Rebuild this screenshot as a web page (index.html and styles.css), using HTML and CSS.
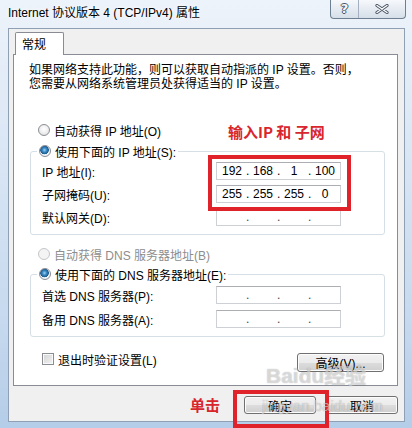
FILE: index.html
```html
<!DOCTYPE html>
<html>
<head>
	<meta charset="UTF-8">
	<title>Internet 协议版本 4 (TCP/IPv4) 属性</title>
<link rel="stylesheet" href="styles.css">
</head>
<body>

<div class="window">
	<div class="titlebar">
		<span class="title">Internet 协议版本 4 (TCP/IPv4) 属性</span>
		<div class="caption">
			<span class="cap-help">?</span>
			<span class="cap-close">
				<svg width="14" height="10" viewBox="0 0 14 10">
					<path d="M2 1.5 L12 8.5 M12 1.5 L2 8.5" stroke="#4a5566" stroke-width="3.2" stroke-linecap="round" fill="none"/>
					<path d="M2 1.5 L12 8.5 M12 1.5 L2 8.5" stroke="#fff" stroke-width="1.4" stroke-linecap="round" fill="none"/>
				</svg>
			</span>
		</div>
	</div>

	<div class="dialog">
		<div class="tabs">
			<span class="tab">常规</span>
		</div>

		<div class="panel">
			<p class="intro">如果网络支持此功能，则可以获取自动指派的 IP 设置。否则，<br>您需要从网络系统管理员处获得适当的 IP 设置。</p>

			<div class="opt opt-ip">
				<span class="radio"></span>自动获得 IP 地址(O)
			</div>

			<fieldset class="group group-ip">
				<legend><span class="radio on"></span>使用下面的 IP 地址(S):</legend>
				<div class="rows rows-ip">
					<div class="row">
						<span>IP 地址(I):</span>
						<div class="ipbox"><span class="seg">192</span><span class="dot">.</span><span class="seg">168</span><span class="dot">.</span><span class="seg">1</span><span class="dot">.</span><span class="seg">100</span></div>
					</div>
					<div class="row">
						<span>子网掩码(U):</span>
						<div class="ipbox"><span class="seg">255</span><span class="dot">.</span><span class="seg">255</span><span class="dot">.</span><span class="seg">255</span><span class="dot">.</span><span class="seg">0</span></div>
					</div>
					<div class="row">
						<span>默认网关(D):</span>
						<div class="ipbox empty"><span class="seg"></span><span class="dot">.</span><span class="seg"></span><span class="dot">.</span><span class="seg"></span><span class="dot">.</span><span class="seg"></span></div>
					</div>
				</div>
			</fieldset>

			<div class="opt opt-dns disabled">
				<span class="radio"></span>自动获得 DNS 服务器地址(B)
			</div>

			<fieldset class="group group-dns">
				<legend><span class="radio on"></span>使用下面的 DNS 服务器地址(E):</legend>
				<div class="rows rows-dns">
					<div class="row">
						<span>首选 DNS 服务器(P):</span>
						<div class="ipbox empty"><span class="seg"></span><span class="dot">.</span><span class="seg"></span><span class="dot">.</span><span class="seg"></span><span class="dot">.</span><span class="seg"></span></div>
					</div>
					<div class="row">
						<span>备用 DNS 服务器(A):</span>
						<div class="ipbox empty"><span class="seg"></span><span class="dot">.</span><span class="seg"></span><span class="dot">.</span><span class="seg"></span><span class="dot">.</span><span class="seg"></span></div>
					</div>
				</div>
			</fieldset>

			<div class="bottom-row">
				<div class="check-label"><span class="check"></span>退出时验证设置(L)</div>
				<span class="btn btn-adv">高级(V)...</span>
			</div>
		</div>

		<div class="footer">
			<span class="btn">确定</span>
			<span class="btn">取消</span>
		</div>
	</div>

	<!-- 标注 -->
	<div class="mark mark-ip"></div>
	<div class="note note-ip">输入IP 和 子网</div>
	<div class="mark mark-ok"></div>
	<div class="note note-ok">单击</div>

	<!-- 水印 -->
	<div class="wm wm-logo">Baidu经验</div>
	<div class="wm wm-url">jingyan.baidu.com</div>
</div>

</body>
</html>
```

FILE: styles.css
```css
* {
	box-sizing: border-box;
}
body {
	margin: 0;
	font: 12px "Liberation Sans", "Noto Sans CJK SC", sans-serif;
	color: #000;
}
p {
	margin: 0;
}
.window {
	position: relative;
	width: 412px;
	height: 428px;
	padding: 0 7px 6px 8px;
	display: flex;
	flex-direction: column;
	overflow: hidden;
	background: linear-gradient(#edf3fa, #dce8f5 30%, #c6d9ee 75%, #b4cde8);
}
.titlebar {
	height: 28px;
	display: flex;
	justify-content: space-between;
	align-items: flex-start;
}
.title {
	margin-top: 6px;
	line-height: 14px;
	text-shadow: 0 0 6px #fff, 0 0 3px #fff;
}
.caption {
	display: flex;
	height: 19px;
	margin-right: -1px;
	border: 1px solid #6f7f93;
	border-top: none;
	border-radius: 0 0 4px 4px;
	background: linear-gradient(#f6f8fb, #e4eaf1 55%, #d6dee8);
	overflow: hidden;
}
.cap-help {
	width: 27px;
	text-align: center;
	font: bold 13px/18px "DejaVu Sans", sans-serif;
	color: #f4f6f8;
	text-shadow: 1px 0 0 #4a5566, -1px 0 0 #4a5566, 0 1px 0 #4a5566, 0 -1px 0 #4a5566;
}
.cap-close {
	width: 47px;
	border-left: 1px solid #a4b0bf;
	display: flex;
	align-items: center;
	justify-content: center;
}
.dialog {
	flex: 1;
	display: flex;
	flex-direction: column;
	padding-top: 3px;
	background: #f0f0f0;
	border: 1px solid #8fa0b5;
}
.tabs {
	display: flex;
	padding-left: 6px;
}
.tab {
	position: relative;
	z-index: 1;
	width: 49px;
	height: 23px;
	margin-bottom: -1px;
	padding: 5px 0 0 6px;
	line-height: 14px;
	background: #fff;
	border: 1px solid #898c95;
	border-bottom: none;
	border-radius: 2px 2px 0 0;
}
.panel {
	height: 332px;
	margin: 0 6px 0 4px;
	display: flex;
	flex-direction: column;
	background: #fff;
	border: 1px solid #898c95;
}
.intro {
	margin: 8px 0 0 15px;
	line-height: 14px;
}
.opt {
	display: flex;
	align-items: center;
	gap: 4px;
	height: 16px;
	padding-left: 24px;
}
.opt-ip {
	margin-top: 31px;
}
.opt-dns {
	margin-top: 11px;
}
.disabled {
	color: #8d8d8d;
}
.radio {
	width: 12px;
	height: 12px;
	border-radius: 50%;
	border: 1px solid #8a8d92;
	background: radial-gradient(circle at 50% 40%, #fff 0, #f1f1f1 45%, #d8d8d8 100%);
}
.radio.on {
	background: radial-gradient(circle at 45% 40%, #9fd3f5 0, #3a8bc8 2px, #1d5b8c 4px, #eaf2f8 4.6px, #f7f7f7 100%);
}
.disabled .radio {
	border-color: #c4c6c9;
	background: #f4f4f4;
}
.group {
	margin: 5px 12px 0 16px;
	padding: 0 0 8px;
	min-width: 0;
	border: 1px solid #d5dfe5;
	border-radius: 3px;
}
.group-dns {
	margin-top: 4px;
}
legend {
	display: flex;
	align-items: center;
	gap: 4px;
	height: 16px;
	margin-left: 6px;
	padding: 0 2px;
	background: #fff;
}
.rows {
	display: flex;
	flex-direction: column;
	gap: 5px;
	padding-top: 3px;
}
.rows-dns {
	gap: 6px;
	padding-top: 4px;
}
.row {
	display: grid;
	grid-template-columns: 174px 125px;
	align-items: center;
	height: 18px;
	padding-left: 11px;
}
.ipbox {
	display: flex;
	height: 18px;
	padding-left: 1px;
	line-height: 16px;
	background: #fff;
	border: 1px solid #cdd0d5;
	border-top-color: #acaeb4;
}
.seg {
	width: 28px;
	text-align: center;
}
.dot {
	width: 3px;
	text-align: center;
}
.empty .dot {
	color: #444;
}
.bottom-row {
	display: flex;
	justify-content: space-between;
	align-items: flex-start;
	margin-top: 14px;
	padding: 0 13px 0 28px;
}
.check-label {
	display: flex;
	align-items: center;
	gap: 4px;
	height: 16px;
}
.check {
	width: 12px;
	height: 12px;
	border: 1px solid #8a8d92;
	background: linear-gradient(135deg, #d4d4d4, #f2f2f2);
	box-shadow: inset 0 0 0 1px #fafafa;
}
.btn {
	display: flex;
	align-items: center;
	justify-content: center;
	height: 18px;
	border: 1px solid #707070;
	border-radius: 3px;
	background: linear-gradient(#f2f2f2, #ebebeb 50%, #dddddd 50%, #cfcfcf);
	box-shadow: inset 0 0 0 1px #fcfcfc;
}
.btn-adv {
	width: 87px;
	height: 19px;
	margin-top: 2px;
}
.footer {
	display: flex;
	justify-content: flex-end;
	gap: 10px;
	margin-top: 10px;
	padding-right: 6px;
}
.footer .btn {
	width: 72px;
}
.mark {
	position: absolute;
	border: 4px solid #e0232b;
}
.mark-ip {
	left: 208px;
	top: 155px;
	width: 143px;
	height: 56px;
}
.mark-ok {
	left: 233px;
	top: 390px;
	width: 96px;
	height: 38px;
}
.note {
	position: absolute;
	font: bold 15px/18px "Noto Sans CJK SC", sans-serif;
	color: #d8262d;
}
.note-ip {
	left: 228px;
	top: 123px;
}
.note-ok {
	left: 190px;
	top: 396px;
}
.wm {
	position: absolute;
	color: rgba(255, 255, 255, 0.55);
	text-shadow: 0 0 1px rgba(0, 0, 0, 0.35);
	font-family: "Liberation Sans", "Noto Sans CJK SC", sans-serif;
	font-weight: bold;
	pointer-events: none;
}
.wm-logo {
	left: 266px;
	top: 364px;
	font-size: 21px;
	line-height: 24px;
}
.wm-url {
	left: 262px;
	top: 397px;
	font-size: 15px;
	line-height: 18px;
	font-weight: normal;
}
```
